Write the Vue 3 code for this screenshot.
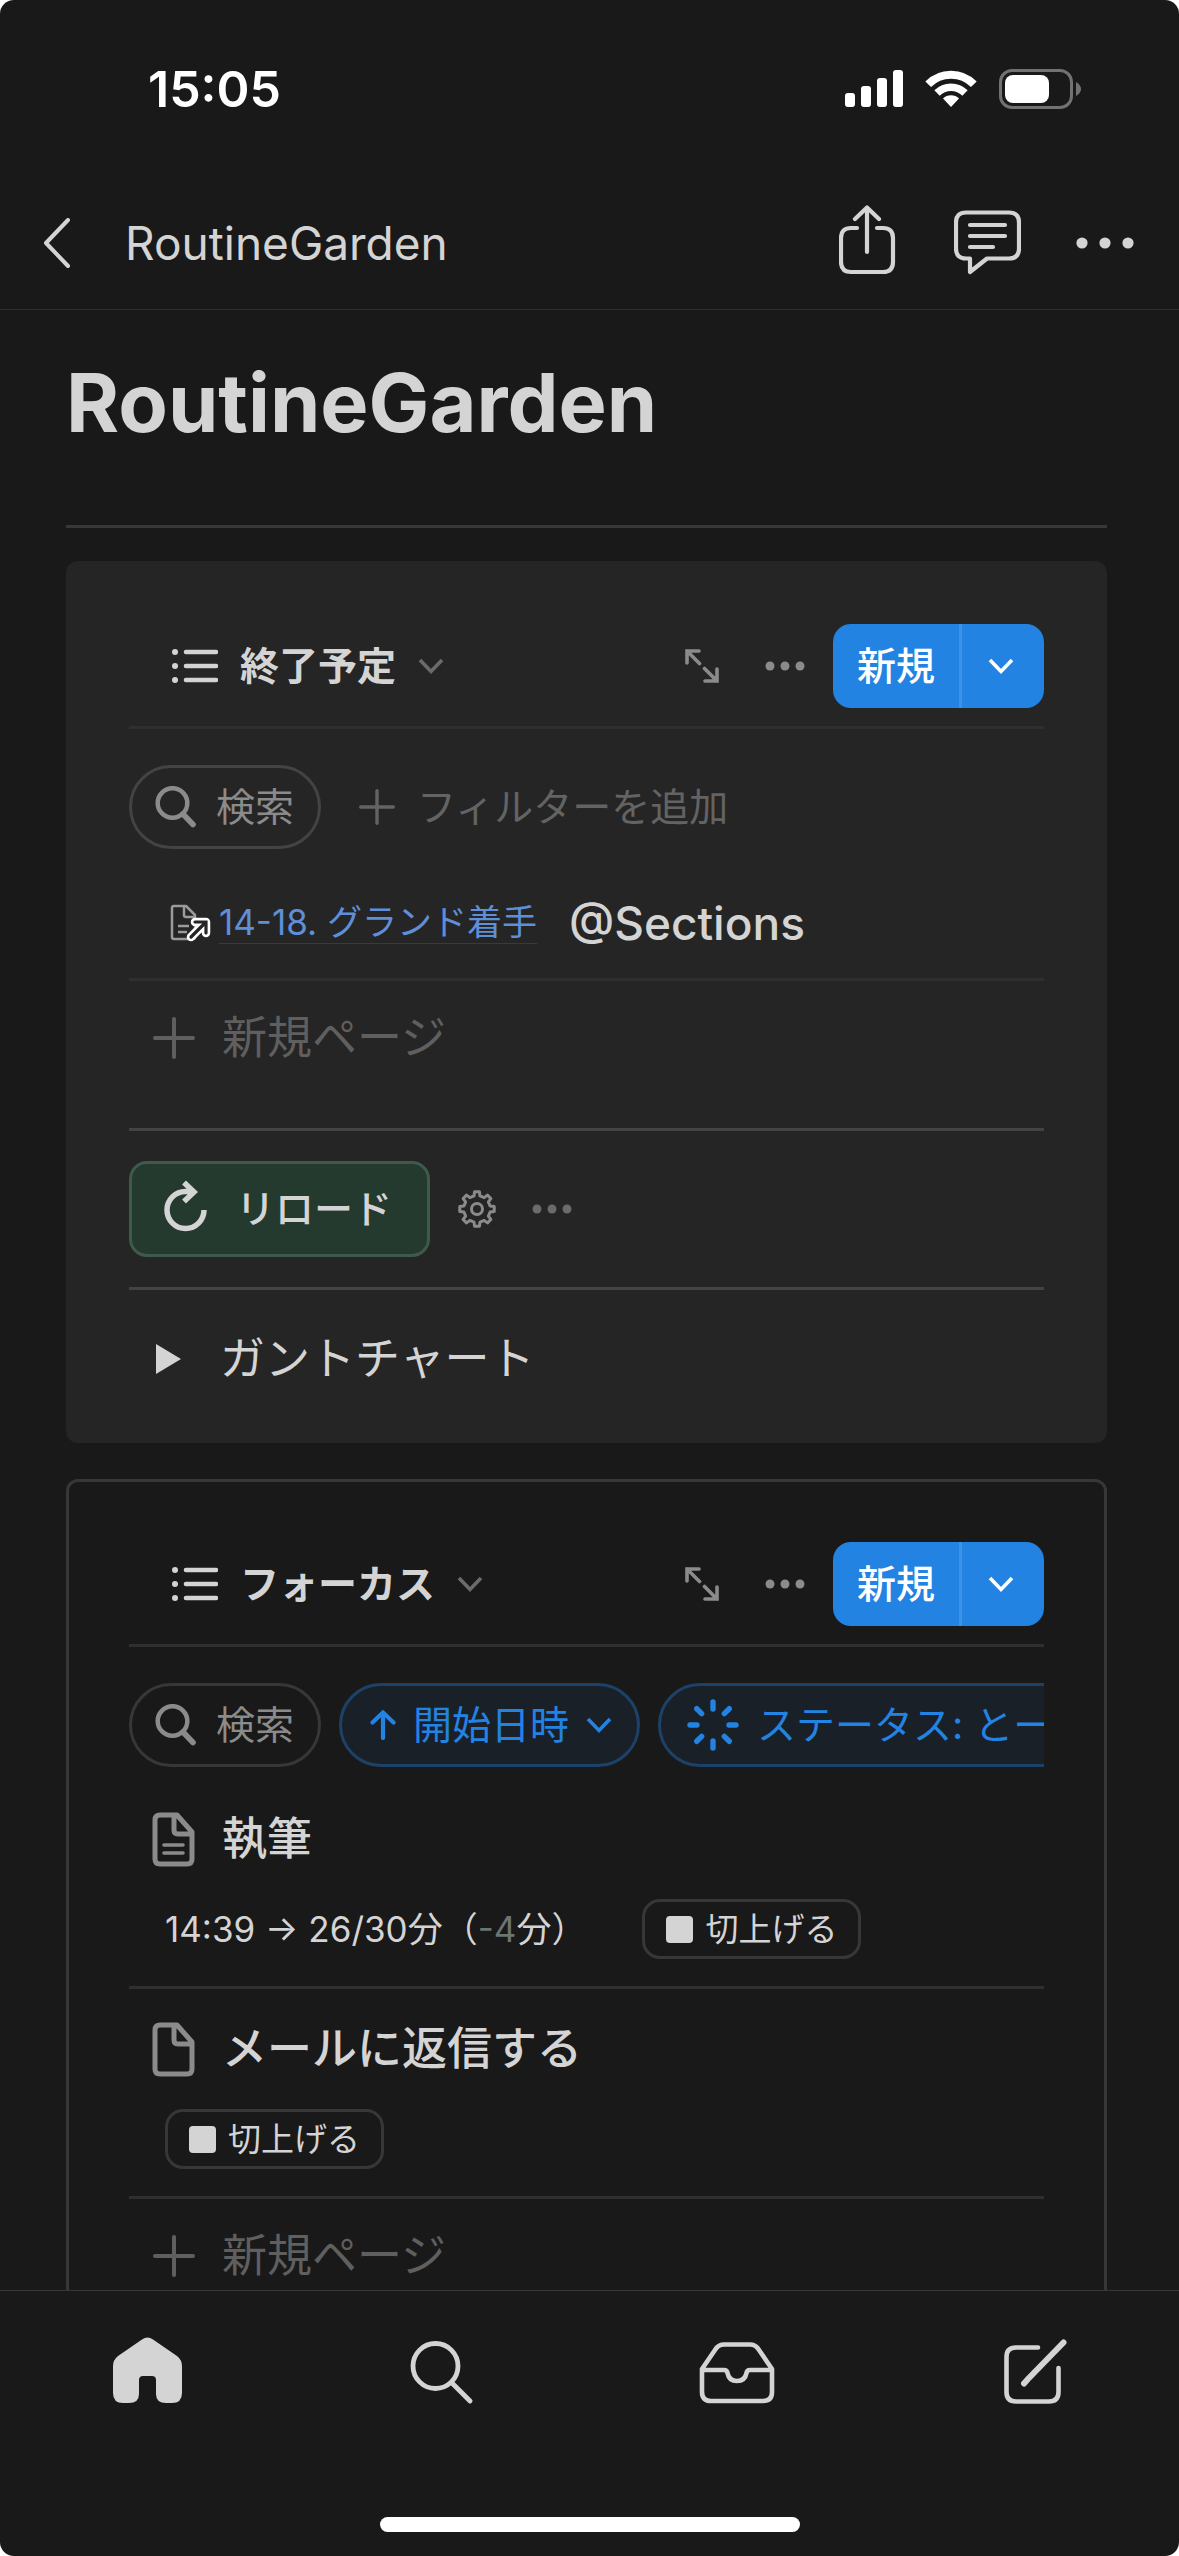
<script setup>
const point = (radius, degrees) => {
  const a = (degrees * Math.PI) / 180
  return `${(19 + radius * Math.sin(a)).toFixed(2)} ${(19 - radius * Math.cos(a)).toFixed(2)}`
}
const gearPath =
  'M' +
  Array.from({ length: 8 }, (_, i) => i * 45)
    .flatMap((d) => [point(13.4, d - 13), point(17.4, d - 8), point(17.4, d + 8), point(13.4, d + 13)])
    .join('L') +
  'Z'

const spokes = Array.from({ length: 8 }, (_, i) => i * 45)

const tasks = [
  { title: '執筆', icon: 'i-doc-text', time: { range: '14:39 → 26/30', diff: '-4' } },
  { title: 'メールに返信する', icon: 'i-doc' },
]
</script>

<template>
  <svg class="sprite" aria-hidden="true">
    <symbol id="i-list" viewBox="0 0 46 34">
      <g fill="currentColor">
        <circle cx="3" cy="3" r="3" /><circle cx="3" cy="17" r="3" /><circle cx="3" cy="31" r="3" />
      </g>
      <path d="M14 3H44M14 17H44M14 31H44" stroke="currentColor" stroke-width="4.6" stroke-linecap="round" />
    </symbol>
    <symbol id="i-chevron" viewBox="0 0 26 18">
      <path d="M2 3L13 14.500L24 3" fill="none" stroke="currentColor" stroke-width="3.600" />
    </symbol>
    <symbol id="i-expand" viewBox="0 0 34 34">
      <path d="M2 14V2H14M2 2L14.500 14.500M32 20V32H20M32 32L19.500 19.500" fill="none" stroke="currentColor" stroke-width="3.6" stroke-linecap="round" />
    </symbol>
    <symbol id="i-dots" viewBox="0 0 40 10">
      <g fill="currentColor"><circle cx="5" cy="5" r="4.500" /><circle cx="20" cy="5" r="4.500" /><circle cx="35" cy="5" r="4.500" /></g>
    </symbol>
    <symbol id="i-search" viewBox="0 0 42 42">
      <g fill="none" stroke="currentColor" stroke-width="4.500"><circle cx="17.500" cy="17" r="14.800" /><path d="M28 28L38 38.500" stroke-width="5.600" stroke-linecap="round" /></g>
    </symbol>
    <symbol id="i-plus" viewBox="0 0 42 42">
      <path d="M21 2V40M2 21H40" stroke="currentColor" stroke-width="4" stroke-linecap="round" />
    </symbol>
    <symbol id="i-doc" viewBox="0 0 43 55">
      <path d="M8 3H25L40 20V47Q40 52 35 52H8Q3 52 3 47V8Q3 3 8 3ZM22 3V18Q22 22 26 22H40" fill="none" stroke="currentColor" stroke-width="5" stroke-linejoin="round" />
    </symbol>
    <symbol id="i-doc-text" viewBox="0 0 43 55">
      <path d="M8 3H25L40 20V47Q40 52 35 52H8Q3 52 3 47V8Q3 3 8 3ZM22 3V18Q22 22 26 22H40" fill="none" stroke="currentColor" stroke-width="5" stroke-linejoin="round" />
      <path d="M12 33H31M12 41H31" stroke="currentColor" stroke-width="3.600" stroke-linecap="round" />
    </symbol>
  </svg>

  <div class="backdrop">
    <div class="screen">
      <div class="status">
        <time>15:05</time>
        <div class="status-icons">
          <svg width="58" height="38" viewBox="0 0 58 38" fill="#fff">
            <rect x="0" y="23" width="10" height="14" rx="3" /><rect x="16" y="16" width="10" height="21" rx="3" />
            <rect x="32" y="8" width="10" height="29" rx="3" /><rect x="48" y="0" width="10" height="37" rx="3" />
          </svg>
          <svg width="52" height="38" viewBox="0 0 52 38" fill="none" stroke="#fff">
            <path d="M3.200 14.300A32 32 0 0 1 48.800 14.300" stroke-width="8" />
            <path d="M12 23A19.800 19.800 0 0 1 40 23" stroke-width="7.500" />
            <path d="M26 37L18 28.600A11.500 11.500 0 0 1 34 28.600Z" fill="#fff" stroke="none" />
          </svg>
          <svg width="82" height="40" viewBox="0 0 82 40">
            <rect x="1.500" y="1.500" width="71" height="37" rx="11.500" fill="none" stroke="#727272" stroke-width="3" />
            <rect x="6" y="6" width="44" height="28" rx="8" fill="#fff" />
            <path d="M77 13Q82 16 82 20T77 27Z" fill="#727272" />
          </svg>
        </div>
      </div>

      <header class="nav">
        <button class="icon-button back" aria-label="戻る">
          <svg width="28" height="50" viewBox="0 0 28 50"><path d="M25 2L3 25L25 48" fill="none" stroke="currentColor" stroke-width="4" stroke-linecap="round" stroke-linejoin="round" /></svg>
        </button>
        <span class="nav-title">RoutineGarden</span>
        <div class="nav-actions">
          <button class="icon-button" aria-label="共有">
            <svg width="60" height="76" viewBox="0 0 60 76" fill="none" stroke="currentColor" stroke-width="4.200" stroke-linecap="round" stroke-linejoin="round">
              <path d="M18 23H12Q2 23 2 33V57Q2 67 12 67H44Q54 67 54 57V33Q54 23 44 23H38M28 47V3M16 14L28 2.500L40 14" />
            </svg>
          </button>
          <button class="icon-button" aria-label="コメント">
            <svg width="67" height="66" viewBox="0 0 67 66" fill="none" stroke="currentColor" stroke-width="4.200" stroke-linecap="round" stroke-linejoin="round">
              <path d="M12 2.500H55Q65 2.500 65 12.500V38.500Q65 48.500 55 48.500H33L16 62V48.500H12Q2 48.500 2 38.500V12.500Q2 2.500 12 2.500Z" />
              <path d="M16 15H51M16 26H51M16 37H39" />
            </svg>
          </button>
          <button class="icon-button" aria-label="その他">
            <svg width="58" height="12" viewBox="0 0 58 12" fill="currentColor"><circle cx="6" cy="6" r="5.600" /><circle cx="29" cy="6" r="5.600" /><circle cx="52" cy="6" r="5.600" /></svg>
          </button>
        </div>
      </header>

      <main>
        <h1>RoutineGarden</h1>
        <hr class="page-rule" />

        <section class="card filled">
          <div class="view-head">
            <button class="view-name">
              <svg class="list"><use href="#i-list" /></svg>
              <span>終了予定</span>
              <svg class="chevron"><use href="#i-chevron" /></svg>
            </button>
            <button class="icon-button muted" aria-label="全画面"><svg class="expand"><use href="#i-expand" /></svg></button>
            <button class="icon-button muted more" aria-label="その他"><svg class="dots"><use href="#i-dots" /></svg></button>
            <div class="split">
              <button class="new">新規</button>
              <button class="new-menu" aria-label="新規メニュー"><svg class="chevron"><use href="#i-chevron" /></svg></button>
            </div>
          </div>
          <div class="filters">
            <button class="pill search"><svg class="glass"><use href="#i-search" /></svg>検索</button>
            <button class="add-filter"><svg class="plus-small"><use href="#i-plus" /></svg>フィルターを追加</button>
          </div>
          <div class="row link-row">
            <svg class="page-link-icon" width="41" height="38" viewBox="0 0 41 38" fill="none">
              <path d="M5 2H16L25 11V33Q25 35 23 35H4Q2 35 2 33V4Q2 2 4 2ZM14 2V11Q14 13 16 13H25M8 22H19M8 28H17" stroke="#9b9b9b" stroke-width="2.500" stroke-linejoin="round" />
              <path d="M21 33L35 19M25 18H36V29" stroke="#fff" stroke-width="8.500" stroke-linecap="round" stroke-linejoin="round" />
              <path d="M21 33L35 19M25 18H36V29" stroke="#252525" stroke-width="3.200" stroke-linecap="round" />
            </svg>
            <a class="page-link" href="#section">14-18. グランド着手</a>
            <span class="mention">@Sections</span>
          </div>
          <button class="new-page"><svg class="plus"><use href="#i-plus" /></svg>新規ページ</button>
          <hr class="rule top-rule" />
          <div class="reload-row">
            <button class="reload">
              <svg width="44" height="58" viewBox="0 0 44 58" fill="none" stroke="currentColor" stroke-width="5.500"><path d="M40 30A18.500 18.500 0 1 1 21.500 11.500H30M20 2.500L30 12L20 21.500" /></svg>
              リロード
            </button>
            <button class="icon-button muted gear" aria-label="設定">
              <svg width="38" height="38" viewBox="0 0 38 38" fill="none" stroke="currentColor" stroke-width="3" stroke-linejoin="round"><path :d="gearPath" /><circle cx="19" cy="19" r="5.500" /></svg>
            </button>
            <button class="icon-button faint" aria-label="その他"><svg class="dots"><use href="#i-dots" /></svg></button>
          </div>
          <hr class="rule" />
          <button class="toggle" aria-expanded="false">
            <svg width="25" height="30" viewBox="0 0 25 30"><path d="M0 0L25 15L0 30Z" fill="currentColor" /></svg>
            ガントチャート
          </button>
        </section>

        <section class="card outlined">
          <div class="view-head">
            <button class="view-name">
              <svg class="list"><use href="#i-list" /></svg>
              <span>フォーカス</span>
              <svg class="chevron"><use href="#i-chevron" /></svg>
            </button>
            <button class="icon-button muted" aria-label="全画面"><svg class="expand"><use href="#i-expand" /></svg></button>
            <button class="icon-button muted more" aria-label="その他"><svg class="dots"><use href="#i-dots" /></svg></button>
            <div class="split">
              <button class="new">新規</button>
              <button class="new-menu" aria-label="新規メニュー"><svg class="chevron"><use href="#i-chevron" /></svg></button>
            </div>
          </div>
          <div class="filters">
            <button class="pill search"><svg class="glass"><use href="#i-search" /></svg>検索</button>
            <button class="pill active sort">
              <svg width="26" height="30" viewBox="0 0 26 30"><path d="M13 28V3M2.500 12.500L13 2.500L23.500 12.500" fill="none" stroke="currentColor" stroke-width="4.200" stroke-linecap="round" /></svg>
              <span>開始日時</span>
              <svg class="chevron"><use href="#i-chevron" /></svg>
            </button>
            <button class="pill active state">
              <svg width="52" height="52" viewBox="0 0 52 52"><path v-for="d in spokes" :key="d" d="M26 3V10" :transform="`rotate(${d} 26 26)`" stroke="currentColor" stroke-width="5.400" stroke-linecap="round" /></svg>
              <span>ステータス: とー</span>
            </button>
          </div>
          <article v-for="task in tasks" :key="task.title" class="row task">
            <div class="task-title">
              <svg class="doc"><use :href="'#' + task.icon" /></svg>
              <span>{{ task.title }}</span>
            </div>
            <div class="task-meta">
              <span v-if="task.time">{{ task.time.range }}分（<span class="diff">{{ task.time.diff }}</span>分）</span>
              <button class="finish"><i></i>切上げる</button>
            </div>
          </article>
          <button class="new-page"><svg class="plus"><use href="#i-plus" /></svg>新規ページ</button>
        </section>
      </main>

      <footer>
        <nav class="tabs">
          <button class="icon-button" aria-label="ホーム">
            <svg width="69" height="70" viewBox="0 0 69 70"><path d="M29 2.500Q34.500 -1.500 40 2.500L64 19Q69 23 69 29V56Q69 66 59 66H53Q43 66 43 57V43Q43 39 39 39H30Q26 39 26 43V57Q26 66 16 66H10Q0 66 0 56V29Q0 23 5 19Z" fill="currentColor" /></svg>
          </button>
          <button class="icon-button" aria-label="検索">
            <svg width="65" height="64" viewBox="0 0 65 64" fill="none" stroke="currentColor" stroke-width="4.800" stroke-linecap="round"><circle cx="25.500" cy="26" r="22.500" /><path d="M42 43L60 61" /></svg>
          </button>
          <button class="icon-button" aria-label="受信トレイ">
            <svg width="76" height="60" viewBox="0 0 76 60" overflow="visible" fill="none" stroke="currentColor" stroke-width="4.600" stroke-linejoin="round"><path d="M25 2.500H51Q56 2.500 59 6.500L73 27V50Q73 59 64 59H12Q3 59 3 50V27L17 6.500Q20 2.500 25 2.500ZM3 28H25Q28 28 28.500 31Q30 39 38 39T47.500 31Q48 28 51 28H73" /></svg>
          </button>
          <button class="icon-button" aria-label="新規作成">
            <svg width="71" height="67" viewBox="-8 0 71 67" fill="none" stroke="currentColor" stroke-width="4.600" stroke-linecap="round"><path d="M34 8.500H12Q2.500 8.500 2.500 18V53Q2.500 62.500 12 62.500H45Q54.500 62.500 54.500 53V29" /><path d="M59.500 3.500L24 40L20 44.500" stroke-width="6" /></svg>
          </button>
        </nav>
        <div class="home-indicator"></div>
      </footer>
    </div>
  </div>
</template>

<style>
body {
  margin: 0;
  background: #fff;
}
</style>

<style scoped>
* {
  box-sizing: border-box;
}
.sprite {
  position: absolute;
  width: 0;
  height: 0;
}
.backdrop {
  background: #fff;
}
.screen {
  display: flex;
  flex-direction: column;
  height: 100vh;
  overflow: hidden;
  border-radius: 14px;
  background: #191919;
  color: #d4d4d4;
  font-family: Inter, "Noto Sans CJK JP", sans-serif;
}
button {
  display: flex;
  align-items: center;
  margin: 0;
  padding: 0;
  border: 0;
  background: none;
  color: inherit;
  font: inherit;
  white-space: nowrap;
}
svg {
  display: block;
  flex: none;
}
hr {
  width: 100%;
  height: 3px;
  margin: 0;
  border: 0;
}

.status {
  display: flex;
  flex: none;
  align-items: center;
  justify-content: space-between;
  height: 177px;
  padding: 0 98px 0 148px;
  color: #fff;
}
.status time {
  font-size: 50px;
  font-weight: 600;
  line-height: 60px;
}
.status-icons {
  display: flex;
  align-items: center;
  gap: 22px;
}

.nav {
  display: flex;
  flex: none;
  align-items: center;
  height: 133px;
  padding: 0 45px 0 43px;
  border-bottom: 1px solid #2f2f2f;
}
.nav-title {
  margin-left: 54px;
  font-size: 46px;
  line-height: 60px;
}
.nav-actions {
  display: flex;
  align-items: center;
  gap: 55px;
  margin-left: auto;
}

main {
  flex: 1;
  min-height: 0;
  overflow: hidden;
  padding: 43px 72px 0 66px;
}
h1 {
  margin: 0 0 72px;
  font-size: 81px;
  font-weight: 700;
  line-height: 100px;
}
.page-rule {
  margin-bottom: 33px;
  background: #373737;
}

.card {
  margin-bottom: 36px;
  border-radius: 12px;
}
.filled {
  padding: 63px 63px 45px;
  background: #252525;
}
.outlined {
  padding: 60px 60px 45px;
  border: 3px solid #373737;
}

.view-head {
  display: flex;
  align-items: center;
  padding-bottom: 18px;
  border-bottom: 3px solid #2f2f2f;
}
.view-name {
  gap: 22px;
  margin-right: auto;
  padding-left: 43px;
  font-size: 39px;
  font-weight: 600;
  line-height: 48px;
}
.view-name .chevron {
  color: #6b6b6b;
}
.list {
  width: 46px;
  height: 34px;
}
.chevron {
  width: 26px;
  height: 18px;
}
.expand {
  width: 34px;
  height: 34px;
}
.dots {
  width: 40px;
  height: 10px;
}
.muted {
  color: #8b8b8b;
}
.faint {
  color: #6b6b6b;
}
.more {
  margin: 0 28px 0 46px;
}
.split {
  display: flex;
  height: 84px;
  border-radius: 18px;
  background: #2383e2;
  color: #fff;
}
.new {
  padding: 0 24px;
  border-right: 3px solid #3c92e6;
  font-size: 39px;
  font-weight: 500;
  line-height: 48px;
}
.new-menu {
  padding: 0 30px 0 26px;
}

.filters {
  display: flex;
  gap: 18px;
  margin: 36px 0 12px;
  overflow: hidden;
  font-size: 39px;
  line-height: 48px;
}
.pill {
  flex: none;
  height: 84px;
  border: 3px solid #373737;
  border-radius: 42px;
}
.search {
  gap: 19px;
  padding: 0 24px 0 23px;
  color: #8b8b8b;
}
.filled .search {
  border-color: #434343;
}
.glass {
  width: 42px;
  height: 42px;
}
.add-filter {
  gap: 22px;
  padding-left: 20px;
  color: #636363;
}
.plus-small {
  width: 36px;
  height: 36px;
}
.active {
  border-color: #1d4269;
  background: #1a2027;
  color: #2383e2;
}
.sort {
  gap: 17px;
  padding: 0 25px 0 28px;
}
.state {
  gap: 18px;
  padding: 0 30px 0 26px;
}

.row {
  border-bottom: 3px solid #2f2f2f;
}
.link-row {
  display: flex;
  align-items: center;
  height: 120px;
  padding: 6px 0 0 41px;
}
.page-link {
  margin: 0 32px 0 8px;
  border-bottom: 1px solid #3a3a3a;
  color: #5e8fd8;
  font-size: 35px;
  line-height: 42px;
  text-decoration: none;
}
.mention {
  font-size: 46px;
  font-weight: 500;
  line-height: 60px;
}
.new-page {
  gap: 27px;
  height: 114px;
  padding-left: 24px;
  color: #5f5f5f;
  font-size: 45px;
  line-height: 60px;
}
.plus {
  width: 42px;
  height: 42px;
}
.rule {
  background: #434343;
}
.top-rule {
  margin-top: 33px;
}
.reload-row {
  display: flex;
  align-items: center;
  margin: 30px 0;
}
.reload {
  gap: 28px;
  height: 96px;
  padding: 0 35px 0 32px;
  border: 3px solid #3d5a4c;
  border-radius: 18px;
  background: #253a2f;
  font-size: 39px;
  font-weight: 500;
  line-height: 48px;
}
.gear {
  margin: 0 36px 0 28px;
}
.toggle {
  gap: 39px;
  height: 78px;
  margin-top: 30px;
  padding-left: 27px;
  font-size: 45px;
  line-height: 60px;
}

.task {
  padding: 24px 0 27px;
}
.task-title {
  display: flex;
  align-items: center;
  gap: 27px;
  height: 72px;
  padding-left: 23px;
  font-size: 45px;
  font-weight: 500;
  line-height: 60px;
}
.doc {
  width: 43px;
  height: 55px;
  color: #8b8b8b;
}
.task-meta {
  display: flex;
  align-items: center;
  gap: 56px;
  margin-top: 24px;
  padding-left: 36px;
  font-size: 35px;
  line-height: 48px;
}
.diff {
  color: #6b7571;
}
.finish {
  gap: 12px;
  height: 60px;
  padding: 0 21px;
  border: 3px solid #373737;
  border-radius: 18px;
  font-size: 33px;
  line-height: 42px;
}
.finish i {
  width: 27px;
  height: 27px;
  border-radius: 4px;
  background: #d4d4d4;
}

footer {
  flex: none;
  padding-bottom: 24px;
  border-top: 1px solid #373737;
}
.tabs {
  display: grid;
  grid-template-columns: repeat(4, 1fr);
  height: 162px;
}
.tabs button {
  justify-content: center;
}
.home-indicator {
  width: 420px;
  height: 15px;
  margin: 64px auto 0;
  border-radius: 8px;
  background: #fff;
}
</style>
